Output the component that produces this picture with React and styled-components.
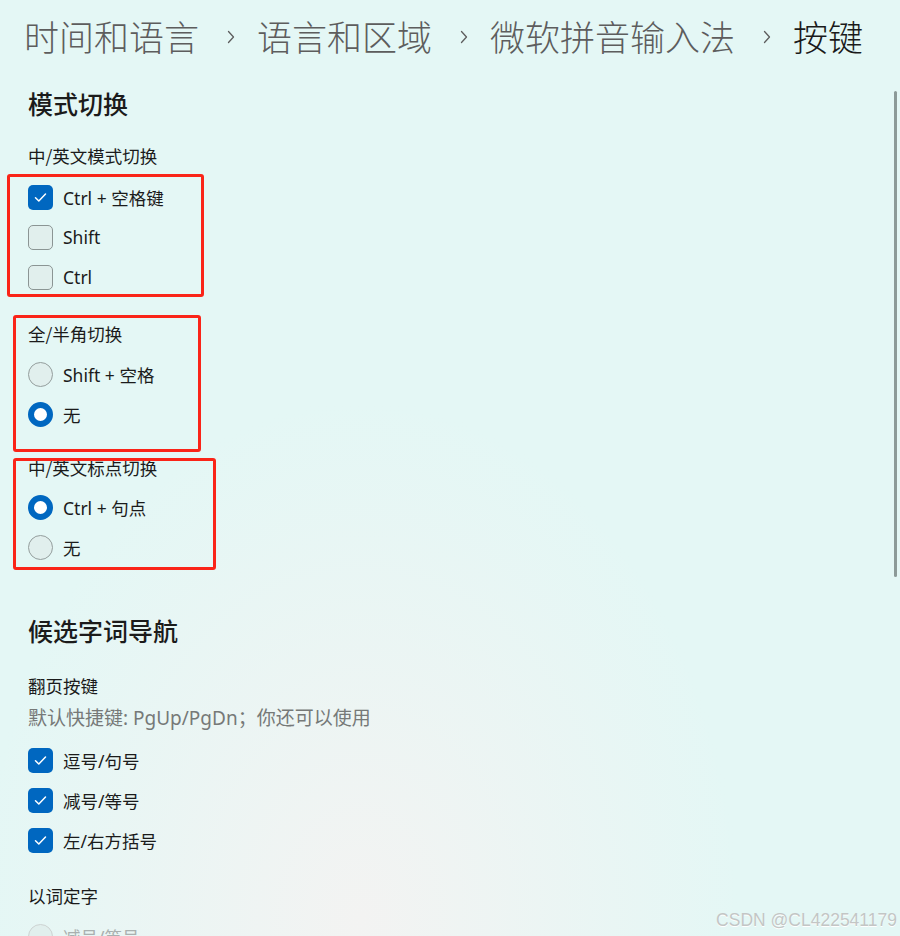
import React from 'react';
import styled, { createGlobalStyle } from 'styled-components';

const GlobalStyle = createGlobalStyle`
  html, body {
    margin: 0;
    padding: 0;
  }
  body {
    font-family: "Segoe UI", "Noto Sans", "Noto Sans CJK SC", sans-serif;
    color: #1b1b1b;
  }
`;

const Page = styled.div`
  position: relative;
  width: 900px;
  height: 936px;
  overflow: hidden;
  background:
    radial-gradient(ellipse 380px 520px at 360px 920px, rgba(243, 243, 242, 1) 0%, rgba(243, 243, 242, 0) 100%),
    #e4f7f5;
`;

const Header = styled.div`
  display: flex;
  align-items: center;
  height: 72px;
  padding-left: 24px;
`;

const Crumb = styled.span`
  font-family: "Noto Sans CJK SC", sans-serif;
  font-size: 35px;
  line-height: 44px;
  font-weight: 300;
  color: ${p => (p.$current ? '#1a1a1a' : '#5d5d5d')};
  white-space: nowrap;
`;

const Chevron = styled.svg`
  width: 8px;
  height: 14px;
  margin: 2px 22px 0 28px;
  flex-shrink: 0;
`;

const Content = styled.div`
  padding-left: 28px;
`;

const SectionTitle = styled.div`
  font-family: "Noto Sans CJK SC", sans-serif;
  font-size: 25px;
  line-height: 34px;
  font-weight: 500;
  margin-top: ${p => p.$top}px;
`;

const Group = styled.div`
  margin-top: ${p => p.$top}px;
`;

const GroupLabel = styled.div`
  font-family: "Noto Sans CJK SC", sans-serif;
  font-size: 17.5px;
  line-height: 24px;
  margin-bottom: ${p => p.$gap}px;
`;

const Description = styled.div`
  font-size: 19px;
  line-height: 24px;
  color: #767978;
  margin-bottom: 10px;
  white-space: nowrap;
`;

const Row = styled.label`
  display: flex;
  align-items: center;
  height: 40px;
  gap: 10px;
  font-size: 17.5px;
  color: ${p => (p.$disabled ? '#a9b0af' : '#1b1b1b')};
`;

const Box = styled.span`
  box-sizing: border-box;
  width: 25px;
  height: 25px;
  border-radius: 5px;
  display: flex;
  align-items: center;
  justify-content: center;
  flex-shrink: 0;
  background: ${p => (p.$checked ? '#0067c0' : '#e1efed')};
  border: ${p => (p.$checked ? 'none' : '1px solid #8b9594')};
`;

const Radio = styled.span`
  box-sizing: border-box;
  width: 25px;
  height: 25px;
  border-radius: 50%;
  flex-shrink: 0;
  background: ${p => (p.$checked ? '#ffffff' : '#e1efed')};
  border: ${p =>
    p.$checked ? '6px solid #0067c0' : p.$disabled ? '1.5px solid #cdd3d2' : '1.5px solid #949e9d'};
`;

const Marker = styled.div`
  position: absolute;
  left: ${p => p.$x}px;
  top: ${p => p.$y}px;
  width: ${p => p.$w}px;
  height: ${p => p.$h}px;
  box-sizing: border-box;
  border: 3px solid #fa2418;
  border-radius: 3px;
  pointer-events: none;
`;

const ScrollThumb = styled.div`
  position: absolute;
  right: 3px;
  top: 91px;
  width: 3px;
  height: 486px;
  border-radius: 2px;
  background: #8c9a98;
`;

const Watermark = styled.div`
  position: absolute;
  right: 3px;
  bottom: 5px;
  font-family: "Liberation Sans", Arial, sans-serif;
  font-size: 17.5px;
  color: #c3c6c5;
  text-shadow: 0 1px 0 #ffffff;
`;

const Check = () => (
  <svg width="25" height="25" viewBox="0 0 25 25">
    <polyline points="7.5,12.8 10.8,16 17.5,9" fill="none" stroke="#fff" strokeWidth="1.5" strokeLinecap="round" strokeLinejoin="round" />
  </svg>
);

const Option = ({ type, checked, disabled, children }) => (
  <Row $disabled={disabled}>
    {type === 'radio'
      ? <Radio $checked={checked} $disabled={disabled} />
      : <Box $checked={checked}>{checked && <Check />}</Box>}
    <span>{children}</span>
  </Row>
);

const crumbs = ['时间和语言', '语言和区域', '微软拼音输入法', '按键'];

const App = () => (
  <Page>
    <GlobalStyle />
    <Header>
      {crumbs.map((c, i) => (
        <React.Fragment key={c}>
          {i > 0 && (
            <Chevron viewBox="0 0 8 14">
              <polyline points="1.5,1.5 6.5,7 1.5,12.5" fill="none" stroke="#5d5d5d" strokeWidth="1.3" strokeLinecap="round" strokeLinejoin="round" />
            </Chevron>
          )}
          <Crumb $current={i === crumbs.length - 1}>{c}</Crumb>
        </React.Fragment>
      ))}
    </Header>

    <Content>
      <SectionTitle $top={14}>模式切换</SectionTitle>

      <Group $top={24}>
        <GroupLabel $gap={9}>中/英文模式切换</GroupLabel>
        <Option checked>Ctrl + 空格键</Option>
        <Option>Shift</Option>
        <Option>Ctrl</Option>
      </Group>

      <Group $top={25}>
        <GroupLabel $gap={8}>全/半角切换</GroupLabel>
        <Option type="radio">Shift + 空格</Option>
        <Option type="radio" checked>无</Option>
      </Group>

      <Group $top={22}>
        <GroupLabel $gap={7}>中/英文标点切换</GroupLabel>
        <Option type="radio" checked>Ctrl + 句点</Option>
        <Option type="radio">无</Option>
      </Group>

      <SectionTitle $top={46}>候选字词导航</SectionTitle>

      <Group $top={27}>
        <GroupLabel $gap={8}>翻页按键</GroupLabel>
        <Description>默认快捷键: PgUp/PgDn；你还可以使用</Description>
        <Option checked>逗号/句号</Option>
        <Option checked>减号/等号</Option>
        <Option checked>左/右方括号</Option>
      </Group>

      <Group $top={24}>
        <GroupLabel $gap={8}>以词定字</GroupLabel>
        <Option type="radio" disabled>减号/等号</Option>
      </Group>
    </Content>

    <Marker $x={7} $y={174} $w={197} $h={123} />
    <Marker $x={13} $y={315} $w={188} $h={137} />
    <Marker $x={13} $y={458} $w={203} $h={112} />

    <ScrollThumb />
    <Watermark>CSDN @CL422541179</Watermark>
  </Page>
);

export default App;
